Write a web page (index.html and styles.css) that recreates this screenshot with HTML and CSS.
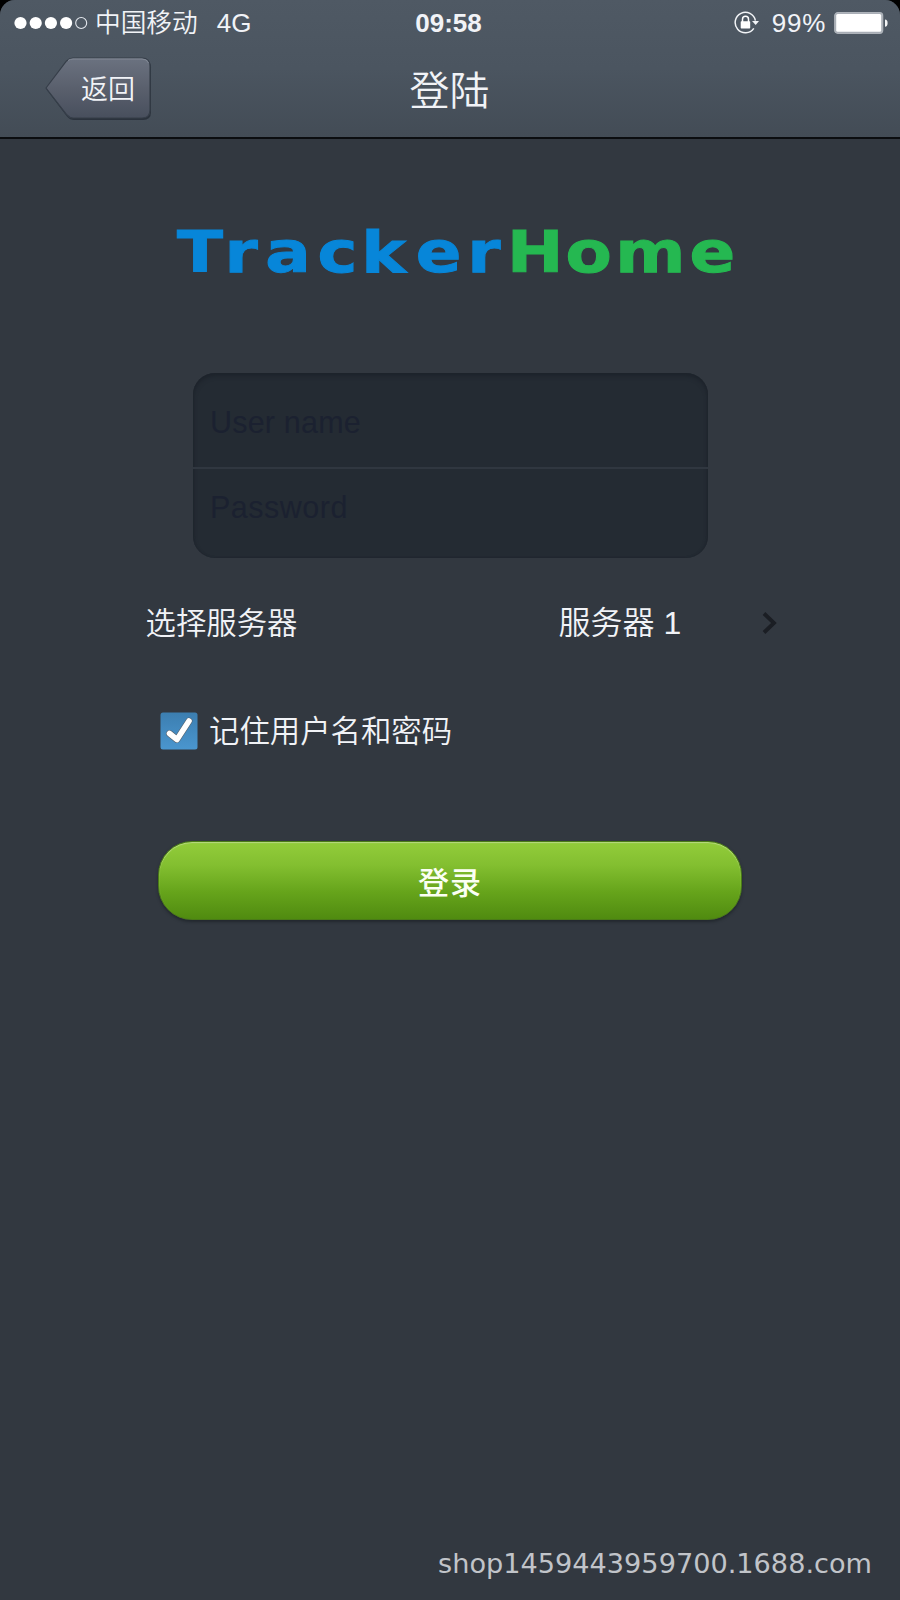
FILE: index.html
```html
<!DOCTYPE html>
<html lang="zh-CN">
<head>
<meta charset="utf-8">
<title>登陆</title>
<link rel="stylesheet" href="styles.css">
</head>
<body>
<div class="screen">
  <header class="header">
    <div class="status">
      <div class="status-left">
        <svg class="signal" width="74" height="14" viewBox="0 0 74 14">
          <g fill="#fff"><circle cx="6.5" cy="7" r="6.1"/><circle cx="21.7" cy="7" r="6.1"/><circle cx="36.9" cy="7" r="6.1"/><circle cx="52.1" cy="7" r="6.1"/></g>
          <circle cx="67.2" cy="7" r="5.5" fill="none" stroke="#e4e8ee" stroke-width="1.1"/>
        </svg>
        <span class="carrier">中国移动</span>
        <span class="network">4G</span>
      </div>
      <span class="time">09:58</span>
      <div class="status-right">
        <svg width="26" height="24" viewBox="0 0 26 24">
          <path d="M19.8 17.3A10.2 10.2 0 1 1 21.4 9.6" fill="none" stroke="#f2f4f7" stroke-width="1.5"/>
          <path d="M18 10h7l-3.3 4z" fill="#f2f4f7"/>
          <rect x="6.7" y="10.3" width="9.5" height="7.2" rx=".7" fill="#fff"/>
          <path d="M8.5 11V8.2a3 3 0 0 1 6 0V11" fill="none" stroke="#fff" stroke-width="1.5"/>
        </svg>
        <span class="percent">99%</span>
        <svg width="54" height="22" viewBox="0 0 54 22">
          <rect x=".7" y=".7" width="48" height="20.6" rx="3" fill="#a7adb5" stroke="#aeb3ba" stroke-width="1.2"/>
          <rect x="2.2" y="2" width="45" height="17.8" rx="1.5" fill="#fff"/>
          <path d="M51 7.5q2.6 0 2.6 3.6T51 14.7z" fill="#f4f5f6"/>
        </svg>
      </div>
    </div>
    <div class="nav">
      <div class="back">
        <svg class="back-shape" width="110" height="68" viewBox="0 0 110 68">
          <defs><linearGradient id="bk" x1="0" y1="0" x2="0" y2="1"><stop offset="0" stop-color="#6b7280"/><stop offset=".5" stop-color="#5a606d"/><stop offset="1" stop-color="#484f5d"/></linearGradient></defs>
          <path d="M3.5 33.5 23.5 7Q27 3.5 31 3.5H100Q108 3.5 108 11.5V56Q108 64 100 64H31Q27 64 24 60.5Z" fill="#242c36" opacity=".8"/>
          <path d="M3 32 23.5 5Q26.5 2 30 2H99Q107 2 107 10V54Q107 62 99 62H30Q26.5 62 24 59Z" fill="url(#bk)" stroke="#363e49" stroke-width="1.2"/>
          <path d="M25 4.5Q27 3 30 3H99Q104 3 105.5 7" fill="none" stroke="#838a96"/>
        </svg>
        <span class="back-label">返回</span>
      </div>
      <h1 class="title">登陆</h1>
    </div>
  </header>
  <main class="main">
    <svg class="logo" width="570" height="96" viewBox="0 0 570 96">
      <text class="logo-text" transform="scale(1.17 1)" y="66" x="6 46.5 81.5 126 163.5 210 254 288 338 380.5 444"><tspan class="logo-blue">Tracker</tspan><tspan class="logo-green">Home</tspan></text>
    </svg>
    <div class="fields">
      <div class="field field-user">User name</div>
      <div class="field field-pass">Password</div>
    </div>
    <div class="server">
      <span class="server-label">选择服务器</span>
      <span class="server-value">服务器 1</span>
      <svg width="16" height="24" viewBox="0 0 16 24"><path d="M2 2.5 12 12 2 21.5" fill="none" stroke="#1b1e24" stroke-width="3.8"/></svg>
    </div>
    <div class="remember">
      <svg width="38" height="38" viewBox="0 0 38 38">
        <defs><linearGradient id="cb" x1="0" y1="0" x2="0" y2="1"><stop offset="0" stop-color="#3c7eb0"/><stop offset="1" stop-color="#4a96cf"/></linearGradient></defs>
        <rect x=".5" y=".5" width="37" height="37" rx="2.5" fill="url(#cb)"/>
        <g fill="none" stroke-linecap="round" stroke-linejoin="round">
          <path d="M9.500 21.500 17 27.500 29 9" stroke="#55606b" stroke-width="6.800"/>
          <path d="M9.500 21.500 17 27.500 29 9" stroke="#fff" stroke-width="5.600"/>
        </g>
      </svg>
      <span class="remember-label">记住用户名和密码</span>
    </div>
    <div class="login">登录</div>
  </main>
  <footer class="footer">shop1459443959700.1688.com</footer>
</div>
</body>
</html>
```
FILE: styles.css
```css
* { box-sizing: border-box; }
body { margin: 0; background: #000; font-family: "Liberation Sans", "Noto Sans CJK SC", sans-serif; color: #f1f3f7; }
.screen { width: 900px; height: 1600px; display: flex; flex-direction: column; background: #323840; border-radius: 15px 15px 0 0; overflow: hidden; }
.header { height: 139px; border-bottom: 2px solid #0b0d10; background: linear-gradient(#4f5964, #4b5560 50%, #434c56); }
.status { height: 46px; display: grid; grid-template-columns: 1fr auto 1fr; align-items: center; padding: 0 12px 0 14px; line-height: 44px; }
.status-left, .status-right { display: flex; align-items: center; height: 44px; }
.status-right { justify-content: flex-end; }
.status-right svg { margin-bottom: 1px; }
.carrier { font: 350 25.7px/44px "Noto Sans CJK SC", sans-serif; margin: -4px 0 0 7px; }
.network { font-size: 26px; margin-left: 19px; }
.time { font-size: 26px; font-weight: 700; height: 44px; line-height: 44px; margin: 0 5px 0 0; }
.percent { font-size: 26px; margin: 0 8px 0 12px; letter-spacing: .7px; }
.nav { display: grid; grid-template-columns: 1fr auto 1fr; height: 91px; padding: 0 44px 0 43px; }
.back { position: relative; width: 110px; height: 68px; margin-top: 10px; }
.back-shape { display: block; }
.back-label { position: absolute; left: 38px; top: 0; font: 350 27px/64px "Noto Sans CJK SC", sans-serif; }
.title { margin: 0; font: 350 40px/84px "Noto Sans CJK SC", sans-serif; }
.main { flex: 1; display: flex; flex-direction: column; align-items: center; padding-top: 67px; }
.logo { display: block; margin-left: 10px; }
.logo-text { font-family: "DejaVu Sans", sans-serif; font-weight: 700; font-size: 57.6px; stroke-width: 1; }
.logo-blue { fill: #0786d9; stroke: #0786d9; }
.logo-green { fill: #25b851; stroke: #25b851; }
.fields { width: 515px; height: 185px; margin: 71px 0 0 1px; border-radius: 22px; background: #242b33; box-shadow: inset 0 3px 4px #1d232b, inset 0 0 2px #1d232b; font-size: 30.5px; color: #1b2130; }
.field { padding-left: 17px; letter-spacing: .2px; }
.field-user { height: 96px; line-height: 99px; border-bottom: 2px solid #303740; }
.field-pass { line-height: 77px; letter-spacing: .5px; }
.server { width: 638px; height: 44px; margin: 41px 0 0 11px; display: flex; align-items: center; font: 350 30.4px/44px "Noto Sans CJK SC", sans-serif; }
.server-label { width: 422px; flex: none; padding-left: 9px; }
.server-value { width: 203px; flex: none; padding-top: 4px; font-family: "Liberation Sans", "Noto Sans CJK SC", sans-serif; font-size: 32px; }
.server svg { flex: none; margin-top: 3px; }
.remember { width: 584px; margin-top: 67px; display: flex; align-items: center; height: 42px; padding-left: 2px; }
.remember-label { font: 350 30.4px/42px "Noto Sans CJK SC", sans-serif; margin: -4px 0 0 11px; }
.login { width: 584px; height: 79px; margin-top: 89px; border: 1px solid #4a7b17; border-radius: 34px; background: linear-gradient(#90ca39 5%, #83bf30 30%, #66a41b 65%, #508b10); box-shadow: inset 0 1px 1px #b8da82, 0 2px 3px #22282e; text-align: center; font: 500 31px/77px "Noto Sans CJK SC", sans-serif; letter-spacing: 1px; color: #fbfff3; }
.footer { height: 60px; padding-right: 28px; text-align: right; font: 27.15px/47px "DejaVu Sans", sans-serif; color: #c1c4c9; }
```
